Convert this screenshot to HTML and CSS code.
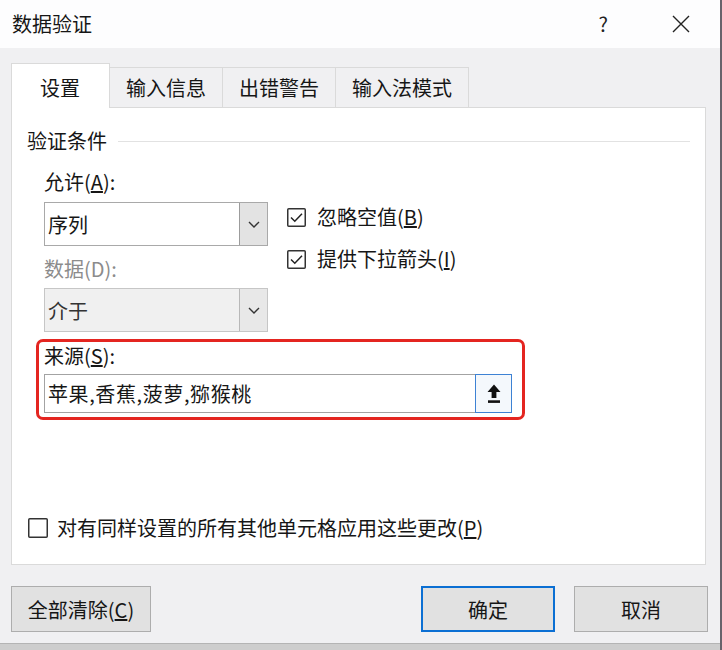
FILE: index.html
```html
<!DOCTYPE html>
<html lang="zh-CN">
<head>
<meta charset="utf-8">
<title>数据验证</title>
<link rel="stylesheet" href="styles.css">
</head>
<body>
<div class="window">
  <div class="titlebar">
    <span class="title">数据验证</span>
    <div class="title-actions">
      <span class="help">?</span>
      <svg class="close" width="18" height="18" viewBox="0 0 18 18"><path d="M1 1 L17 17 M17 1 L1 17" stroke="#222" stroke-width="1.4" fill="none"/></svg>
    </div>
  </div>
  <div class="content">
    <div class="tabs">
      <div class="tab active">设置</div>
      <div class="tab">输入信息</div>
      <div class="tab">出错警告</div>
      <div class="tab">输入法模式</div>
    </div>
    <div class="panel">
      <div class="group-title"><span>验证条件</span><span class="rule"></span></div>
      <div class="group-body">
        <div class="settings-row">
          <div class="left-col">
            <div class="label first">允许(<u>A</u>):</div>
            <div class="select">
              <span class="select-text">序列</span>
              <span class="select-btn"><svg width="12" height="7" viewBox="0 0 12 7"><path d="M1 1 L6 6 L11 1" stroke="#333" stroke-width="1.4" fill="none"/></svg></span>
            </div>
            <div class="label disabled second">数据(D):</div>
            <div class="select disabled-select">
              <span class="select-text">介于</span>
              <span class="select-btn"><svg width="12" height="7" viewBox="0 0 12 7"><path d="M1 1 L6 6 L11 1" stroke="#333" stroke-width="1.4" fill="none"/></svg></span>
            </div>
          </div>
          <div class="right-col">
            <div class="check-row">
              <svg class="cb" width="19" height="19" viewBox="0 0 19 19"><rect x="0.75" y="0.75" width="17.5" height="17.5" rx="1" fill="#fff" stroke="#333" stroke-width="1.5"/><path d="M4 9.5 L7.8 13.2 L15 5.8" stroke="#222" stroke-width="1.5" fill="none"/></svg>
              <span>忽略空值(<u>B</u>)</span>
            </div>
            <div class="check-row second-check">
              <svg class="cb" width="19" height="19" viewBox="0 0 19 19"><rect x="0.75" y="0.75" width="17.5" height="17.5" rx="1" fill="#fff" stroke="#333" stroke-width="1.5"/><path d="M4 9.5 L7.8 13.2 L15 5.8" stroke="#222" stroke-width="1.5" fill="none"/></svg>
              <span>提供下拉箭头(<u>I</u>)</span>
            </div>
          </div>
        </div>
        <div class="source-box">
          <div class="label">来源(<u>S</u>):</div>
          <div class="source-input">
            <span class="source-text">苹果,香蕉,菠萝,猕猴桃</span>
            <span class="collapse-btn"><svg width="14" height="20" viewBox="0 0 14 20"><path d="M7 0.5 L13.5 8 H9.4 V14 H4.6 V8 H0.5 Z" fill="#111"/><rect x="1" y="16.3" width="12" height="2.6" fill="#111"/></svg></span>
          </div>
        </div>
      </div>
      <div class="check-row apply-row">
        <svg class="cb" width="20" height="20" viewBox="0 0 20 20"><rect x="0.75" y="0.75" width="18.5" height="18.5" rx="1" fill="#fff" stroke="#333" stroke-width="1.5"/></svg>
        <span>对有同样设置的所有其他单元格应用这些更改(<u>P</u>)</span>
      </div>
    </div>
    <div class="buttons">
      <button class="btn clear">全部清除(<u>C</u>)</button>
      <button class="btn ok">确定</button>
      <button class="btn cancel">取消</button>
    </div>
  </div>
  <div class="strip"></div>
</div>
</body>
</html>
```

FILE: styles.css
```css
* { box-sizing: border-box; }
html, body { margin: 0; padding: 0; }
body {
  font-family: "Noto Sans CJK SC", "Noto Sans", sans-serif;
  color: #161616;
  background: #f0f0f2;
}
.window {
  width: 722px;
  height: 650px;
  border-right: 2px solid #67626b;
  display: flex;
  flex-direction: column;
  background: #f0f0f2;
  overflow: hidden;
}
.titlebar {
  height: 48px;
  flex: none;
  background: #fdfdfe;
  display: flex;
  align-items: center;
  padding: 0 30px 0 12px;
}
.title { font-size: 20px; line-height: 24px; }
.title-actions { margin-left: auto; display: flex; align-items: center; }
.help { font-size: 20px; line-height: 24px; color: #222; }
.close { margin-left: 64px; }

.content { padding: 15px 14px 0 11px; flex: none; }

.tabs { display: flex; align-items: flex-end; height: 44px; }
.tab {
  height: 40px;
  line-height: 40px;
  font-size: 20px;
  padding: 0 16px;
  border: 1px solid #dadada;
  border-bottom: none;
  margin-left: -1px;
  background: #f0f0f2;
}
.tab.active {
  height: 45px;
  margin-left: 0;
  margin-bottom: -1px;
  padding: 4px 29px 0 28px;
  background: #fff;
  position: relative;
  z-index: 1;
}

.panel {
  height: 458px;
  background: #fff;
  border: 1px solid #dadada;
  padding: 21px 15px 0 15px;
}
.group-title {
  display: flex;
  align-items: center;
  font-size: 20px;
  line-height: 24px;
}
.group-title .rule { flex: 1; height: 1px; background: #e2e2e2; margin-left: 11px; }

.group-body { padding-left: 17px; }
.settings-row { display: flex; }
.left-col { width: 224px; }
.label { font-size: 20px; line-height: 24px; }
.label.first { margin-top: 17px; }
.label.second { margin-top: 11px; }
.label.disabled { color: #8c8c8c; }

.select {
  margin-top: 8px;
  height: 44px;
  border: 1px solid #a9a9a9;
  background: #fff;
  display: flex;
  align-items: stretch;
}
.select-text { flex: 1; font-size: 20px; display: flex; align-items: center; padding-left: 3px; }
.select-btn {
  width: 28px;
  background: #e3e3e3;
  border-left: 1px solid #9c9c9c;
  display: flex;
  align-items: center;
  justify-content: center;
}
.disabled-select { margin-top: 7px; background: #f0f0f0; border-color: #c6c6c6; }
.disabled-select .select-text { color: #333; }
.disabled-select .select-btn { background: #e8e8e8; border-left-color: #b8b8b8; }

.right-col { margin-left: 19px; padding-top: 52px; }
.check-row {
  display: flex;
  align-items: center;
  font-size: 20px;
  line-height: 24px;
}
.check-row .cb { flex: none; margin-right: 11px; }
.second-check { margin-top: 18px; }

.source-box {
  margin-top: 7px;
  margin-left: -8px;
  width: 489px;
  border: 3px solid #e42520;
  border-radius: 7px;
  padding: 2px 10px 4px 5px;
}
.source-input {
  margin-top: 6px;
  height: 39px;
  border: 1px solid #a3a3a3;
  display: flex;
  align-items: stretch;
}
.source-text { flex: 1; font-size: 20px; display: flex; align-items: center; padding-left: 3px; letter-spacing: 0.6px; }
.collapse-btn {
  width: 37px;
  margin: -1px -1px -1px 0;
  border: 1px solid #3d82d4;
  background: #f4f8fc;
  display: flex;
  align-items: center;
  justify-content: center;
}

.apply-row { margin-top: 96px; margin-left: 1px; }
.apply-row .cb { margin-right: 9px; }

.buttons {
  display: flex;
  margin-top: 21px;
  margin-right: -2px;
}
.btn {
  font-family: inherit;
  font-size: 20px;
  color: #161616;
  height: 46px;
  background: #e1e1e1;
  border: 1px solid #adadad;
  padding: 0;
}
.btn.clear { width: 140px; }
.btn.ok { width: 134px; margin-left: auto; border: 2px solid #0b6fd3; }
.btn.cancel { width: 134px; margin-left: 19px; }

.strip {
  margin-top: auto;
  height: 7px;
  flex: none;
  background: #cdcdcd;
  border-top: 1px solid #b4b4b4;
}
```
